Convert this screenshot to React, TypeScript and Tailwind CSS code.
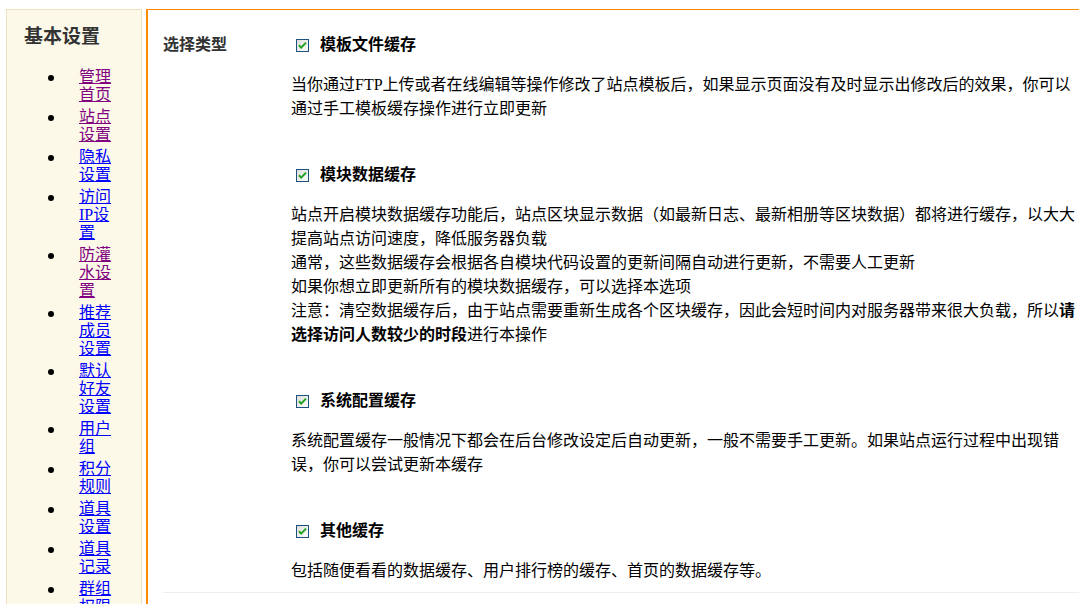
import React from 'react'

const font = { fontFamily: '"Liberation Serif", "Noto Sans CJK SC", serif' }

const navItems = [
  { label: '管理首页', visited: true },
  { label: '站点设置', visited: true },
  { label: '隐私设置', visited: false },
  { label: '访问IP设置', visited: false },
  { label: '防灌水设置', visited: true },
  { label: '推荐成员设置', visited: false },
  { label: '默认好友设置', visited: false },
  { label: '用户组', visited: false },
  { label: '积分规则', visited: false },
  { label: '道具设置', visited: false },
  { label: '道具记录', visited: false },
  { label: '群组权限', visited: false },
]

function Check() {
  return (
    <svg width="13" height="13" viewBox="0 0 13 13" className="ml-[5px] mr-[11px] shrink-0">
      <defs>
        <linearGradient id="cbg" x1="0" y1="0" x2="1" y2="1">
          <stop offset="0" stopColor="#dcdcd7" />
          <stop offset="1" stopColor="#ffffff" />
        </linearGradient>
      </defs>
      <rect x="0.5" y="0.5" width="12" height="12" fill="url(#cbg)" stroke="#1c5180" />
      <path d="M3 6.2 L5.2 8.6 L10 3.6" fill="none" stroke="#21a121" strokeWidth="2" />
    </svg>
  )
}

function Section({ title, children, last }: { title: string; children: React.ReactNode; last?: boolean }) {
  return (
    <div className={last ? '' : 'mb-[42px]'}>
      <div className="flex items-center h-6 font-bold text-black">
        <Check />
        <span>{title}</span>
      </div>
      <div className="mt-4 leading-6 text-black">{children}</div>
    </div>
  )
}

export default function App() {
  return (
    <div className="h-[604px] w-[1079px] overflow-hidden bg-white text-base" style={font}>
      <div className="flex pt-[9px] pl-[6px] gap-[4px]">
        <div className="w-[136px] h-[700px] shrink-0 border border-[#ece2bf] bg-[#fcf9e9]">
          <div className="pl-[17px] pt-[15px] text-[19px] font-bold leading-6 text-[#333]">基本设置</div>
          <ul className="mt-[19px]">
            {navItems.map((item) => (
              <li key={item.label} className="flex mb-[4px] leading-[18px]">
                <span className="w-[72px] flex justify-end pr-[25px] pt-[7px]">
                  <span className="block w-[6px] h-[6px] rounded-full bg-black" />
                </span>
                <a
                  href="#"
                  className={`block w-[32px] underline ${item.visited ? 'text-[#800080]' : 'text-[#0000ff]'}`}
                >
                  {item.label}
                </a>
              </li>
            ))}
          </ul>
        </div>
        <div className="flex-1 border-t border-l-2 border-[#ff8c00] pl-[15px] pt-[23px]">
          <div className="flex border-b border-[#eeeeee] pb-[9px]">
            <div className="w-[128px] shrink-0 h-6 leading-6 font-bold text-[#333]">选择类型</div>
            <div className="flex-1">
              <Section title="模板文件缓存">
                当你通过FTP上传或者在线编辑等操作修改了站点模板后，如果显示页面没有及时显示出修改后的效果，你可以通过手工模板缓存操作进行立即更新
              </Section>
              <Section title="模块数据缓存">
                站点开启模块数据缓存功能后，站点区块显示数据（如最新日志、最新相册等区块数据）都将进行缓存，以大大提高站点访问速度，降低服务器负载
                <br />
                通常，这些数据缓存会根据各自模块代码设置的更新间隔自动进行更新，不需要人工更新
                <br />
                如果你想立即更新所有的模块数据缓存，可以选择本选项
                <br />
                注意：清空数据缓存后，由于站点需要重新生成各个区块缓存，因此会短时间内对服务器带来很大负载，所以<b>请选择访问人数较少的时段</b>进行本操作
              </Section>
              <Section title="系统配置缓存">
                系统配置缓存一般情况下都会在后台修改设定后自动更新，一般不需要手工更新。如果站点运行过程中出现错误，你可以尝试更新本缓存
              </Section>
              <Section title="其他缓存" last>
                包括随便看看的数据缓存、用户排行榜的缓存、首页的数据缓存等。
              </Section>
            </div>
          </div>
        </div>
      </div>
    </div>
  )
}
